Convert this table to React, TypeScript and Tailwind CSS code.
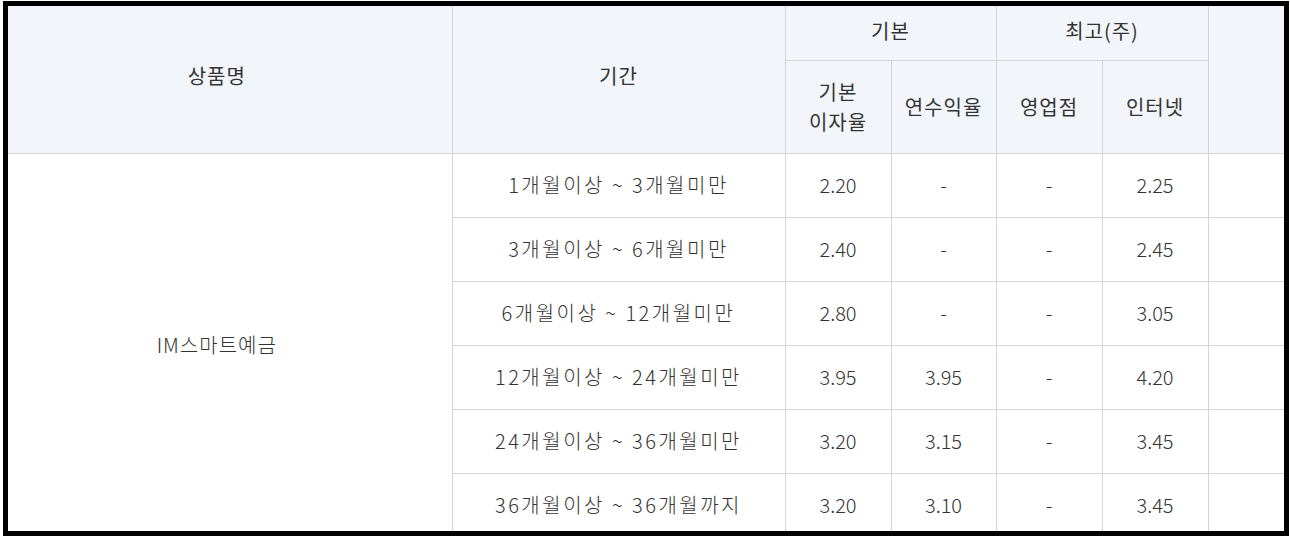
import React from 'react';

interface RateRow {
  period: string;
  base: string;
  yearly: string;
  branch: string;
  internet: string;
}

const rows: RateRow[] = [
  { period: '1개월이상 ~ 3개월미만', base: '2.20', yearly: '-', branch: '-', internet: '2.25' },
  { period: '3개월이상 ~ 6개월미만', base: '2.40', yearly: '-', branch: '-', internet: '2.45' },
  { period: '6개월이상 ~ 12개월미만', base: '2.80', yearly: '-', branch: '-', internet: '3.05' },
  { period: '12개월이상 ~ 24개월미만', base: '3.95', yearly: '3.95', branch: '-', internet: '4.20' },
  { period: '24개월이상 ~ 36개월미만', base: '3.20', yearly: '3.15', branch: '-', internet: '3.45' },
  { period: '36개월이상 ~ 36개월까지', base: '3.20', yearly: '3.10', branch: '-', internet: '3.45' },
];

const line = 'border-[#d4d4d4]';
const head = `bg-[#f2f6fa] font-normal text-center align-middle ${line}`;
const cell = `text-center align-middle border-b border-r ${line}`;

export default function App() {
  return (
    <div
      className="w-[1290px] h-[536px] bg-white pl-[3px] pt-px text-[#333] text-[20px]"
      style={{ fontFamily: '"Noto Sans CJK KR", "Noto Sans", sans-serif' }}
    >
      <div className="w-[1286px] h-[535px] border-[5px] border-black overflow-hidden bg-white">
        <table className="table-fixed border-collapse w-[1277px] font-light">
          <colgroup>
            <col className="w-[444px]" />
            <col className="w-[333px]" />
            <col className="w-[106px]" />
            <col className="w-[105px]" />
            <col className="w-[106px]" />
            <col className="w-[106px]" />
            <col className="w-[77px]" />
          </colgroup>
          <thead>
            <tr className="h-[54px]">
              <th rowSpan={2} className={`${head} border-b border-r pr-[26px] pb-[6px] tracking-[1px]`}>
                상품명
              </th>
              <th rowSpan={2} className={`${head} border-b border-r pb-[6px] tracking-[1px]`}>
                기간
              </th>
              <th colSpan={2} className={`${head} border-b border-r pb-[4px] tracking-[1px]`}>
                기본
              </th>
              <th colSpan={2} className={`${head} border-b border-r pb-[4px] tracking-[1px]`}>
                최고(주)
              </th>
              <th rowSpan={2} className={`${head} border-b`} />
            </tr>
            <tr className="h-[93px]">
              <th className={`${head} border-b border-r leading-[30px] tracking-[1px]`}>
                기본
                <br />
                이자율
              </th>
              <th className={`${head} border-b border-r tracking-[1px]`}>연수익율</th>
              <th className={`${head} border-b border-r tracking-[1px]`}>영업점</th>
              <th className={`${head} border-b border-r tracking-[1px]`}>인터넷</th>
            </tr>
          </thead>
          <tbody>
            {rows.map((row, i) => (
              <tr key={row.period} className="h-[64px]">
                {i === 0 && (
                  <td rowSpan={rows.length} className={`${cell} pr-[26px] tracking-[1px]`}>
                    IM스마트예금
                  </td>
                )}
                <td className={`${cell} tracking-[2.5px]`}>{row.period}</td>
                <td className={cell}>{row.base}</td>
                <td className={cell}>{row.yearly}</td>
                <td className={cell}>{row.branch}</td>
                <td className={cell}>{row.internet}</td>
                <td className={`text-center align-middle border-b ${line}`} />
              </tr>
            ))}
          </tbody>
        </table>
      </div>
    </div>
  );
}
